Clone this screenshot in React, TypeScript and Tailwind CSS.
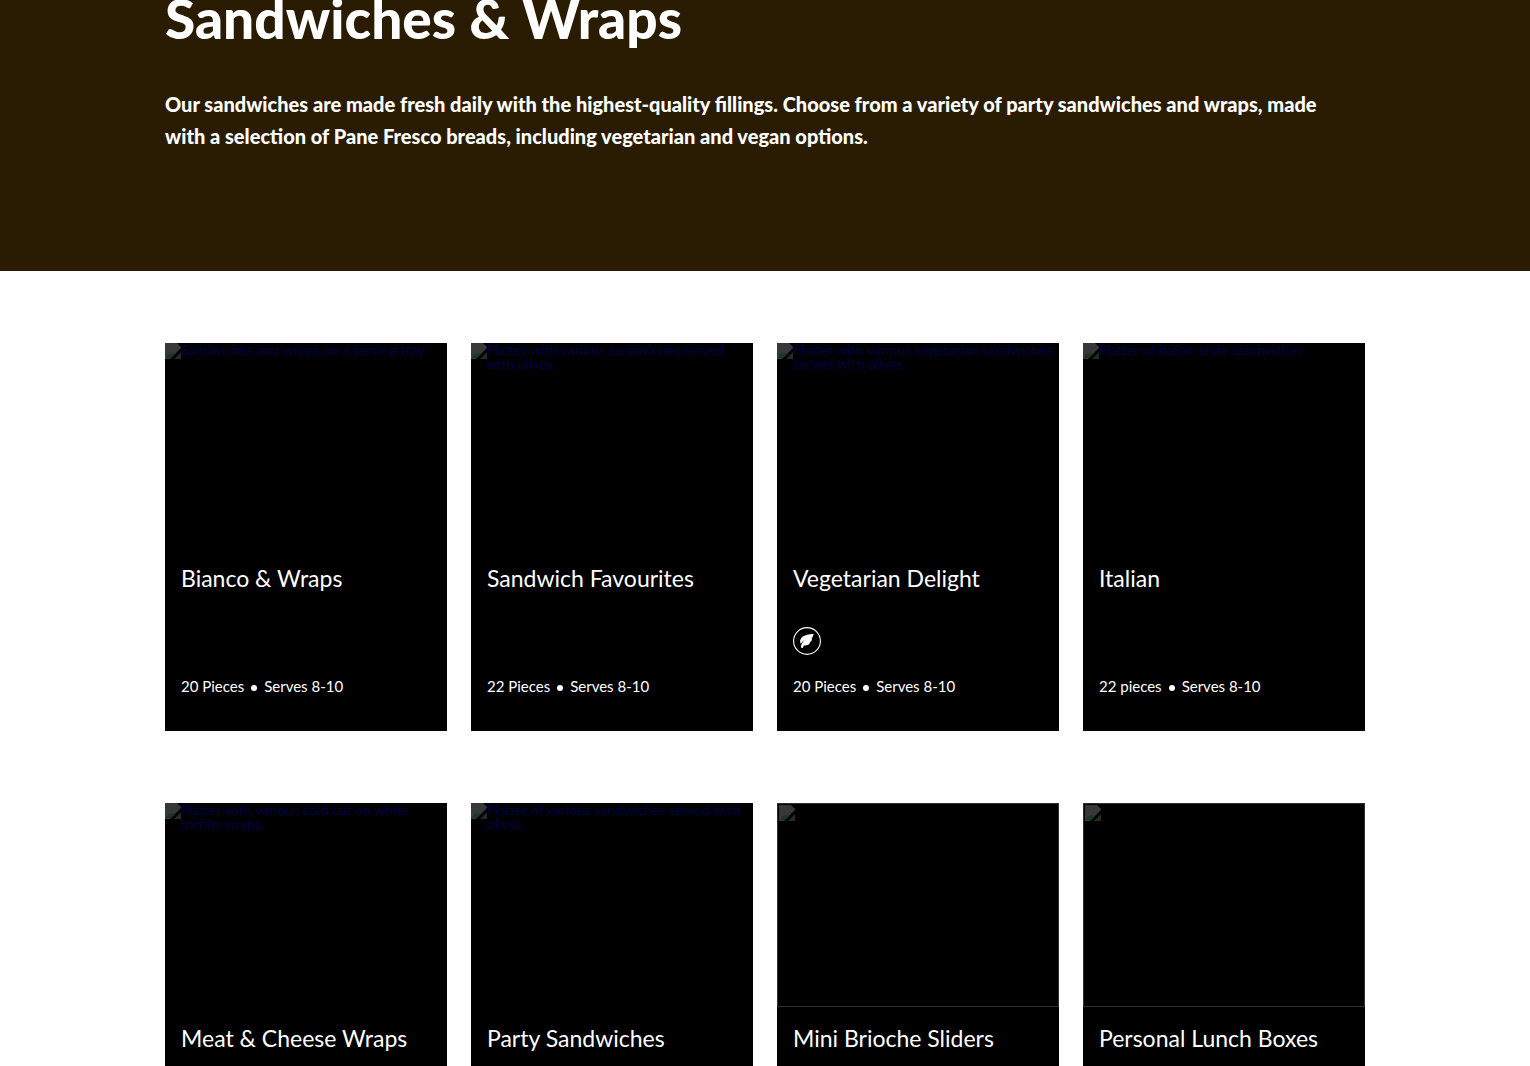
type Product = {
  name: string;
  alt: string[];
  pieces: string;
  vegetarian?: boolean;
};

const products: Product[] = [
  { name: "Bianco & Wraps", alt: ["Sandwiches and wraps on a serving tray"], pieces: "20 Pieces" },
  { name: "Sandwich Favourites", alt: ["Platter with various sandwiches served", "with olives."], pieces: "22 Pieces" },
  { name: "Vegetarian Delight", alt: ["Platter with various vegetarian sandwiches", "served with olives."], pieces: "20 Pieces", vegetarian: true },
  { name: "Italian", alt: ["Platter of Italian style sandwiches"], pieces: "22 pieces" },
  { name: "Meat & Cheese Wraps", alt: ["Platter with various cold cut on white", "tortilla wraps."], pieces: "20 Pieces" },
  { name: "Party Sandwiches", alt: ["Platter of various sandwiches served with", "olives."], pieces: "20 Pieces" },
  { name: "Mini Brioche Sliders", alt: [], pieces: "20 Pieces" },
  { name: "Personal Lunch Boxes", alt: [], pieces: "20 Pieces" },
];

function BrokenImage() {
  return (
    <svg className="size-4 shrink-0" viewBox="0 0 16 16" aria-hidden="true">
      <path d="M0 0h12l4 4v1L5 16H0Z" fill="#36383a" />
      <path d="M1 15c1-4 5-6 9-4l-4 4H1Z" fill="#1c381c" />
      <path d="M16 9v7H9Z" fill="#262829" />
    </svg>
  );
}

function LeafBadge() {
  return (
    <svg className="size-7" viewBox="0 0 28 28" role="img" aria-label="Vegetarian">
      <circle cx="14" cy="14" r="13.4" fill="none" stroke="#fff" strokeWidth="1.1" />
      <path
        d="M20.8 7C16 7 10.500 8 8.100 11.200c-1.300 1.800-1.200 4-.3 5.500 1.300-1.900 2.800-3.300 4.600-4.500-1.900 1.800-3.300 3.600-4.100 5.800-.3.900-.5 1.800-.2 2.600.6.500 1.500.4 1.900-.2l.8-2c2.900.3 5.600-.6 6.500-3l-1-.1 1.800-.8c.7-1 .9-2 1-3l-1-.1 1.300-.7c.3-1.300.6-2.500 1.400-3.700Z"
        fill="#fff"
      />
    </svg>
  );
}

function Card({ product }: { product: Product }) {
  const hasAlt = product.alt.length > 0;
  return (
    <a href="#" className="flex min-h-97 flex-col bg-black text-white">
      <div className={hasAlt ? "flex h-51 items-start" : "flex h-51 items-start border border-[#303030] p-px"}>
        <BrokenImage />
        <span className="text-sm leading-3.5 whitespace-nowrap text-[#000044]">
          {product.alt.map((line) => (
            <span key={line} className="block">
              {line}
            </span>
          ))}
        </span>
      </div>
      <div className="flex flex-col px-4 pt-4">
        <h2 className="text-[23px] leading-[30px] whitespace-nowrap">{product.name}</h2>
        <div className="mt-[34px] h-7">{product.vegetarian && <LeafBadge />}</div>
        <p className="mt-5 flex items-center text-[15px] leading-[22px]">
          <span>{product.pieces}</span>
          <span className="mx-[7px] mt-1 size-1.5 rounded-full bg-white" />
          <span>Serves 8-10</span>
        </p>
      </div>
    </a>
  );
}

export default function App() {
  return (
    <div className="h-screen overflow-hidden bg-white font-['Lato',sans-serif]">
      <header className="bg-[#2a1c02] px-6 pb-[119px] text-white">
        <div className="mx-auto max-w-300">
          <h1 className="text-[55px] leading-9 font-black">Sandwiches &amp; Wraps</h1>
          <p className="mt-13 max-w-[1180px] text-xl leading-8 font-black">
            Our sandwiches are made fresh daily with the highest-quality fillings. Choose from a variety of party
            sandwiches and wraps, made with a selection of Pane Fresco breads, including vegetarian and vegan options.
          </p>
        </div>
      </header>
      <main className="px-6 pt-18">
        <div className="mx-auto grid max-w-300 grid-cols-4 gap-x-6 gap-y-18">
          {products.map((product) => (
            <Card key={product.name} product={product} />
          ))}
        </div>
      </main>
    </div>
  );
}
